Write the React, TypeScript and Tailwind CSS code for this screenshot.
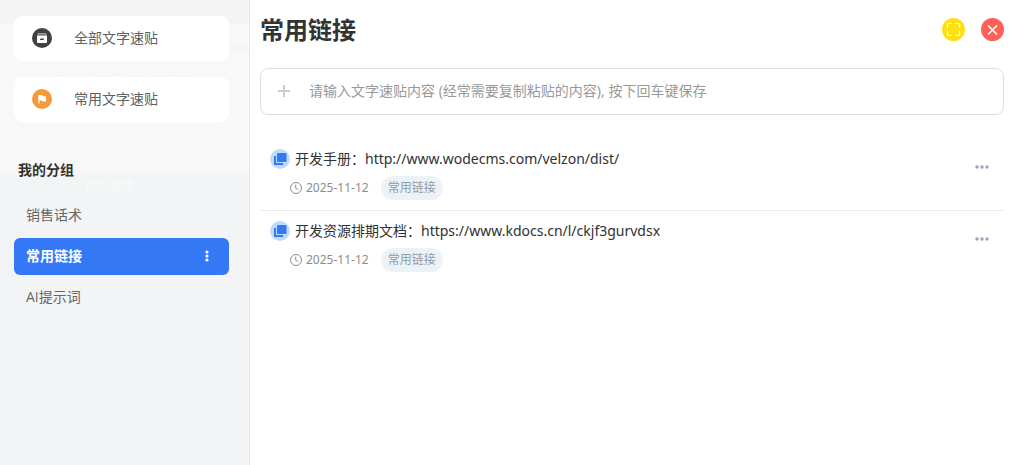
import type { ReactNode } from "react";

type Snippet = { title: string; date: string; group: string };

const groups = ["销售话术", "常用链接", "AI提示词"];
const activeGroup = "常用链接";

const snippets: Snippet[] = [
  { title: "开发手册：http://www.wodecms.com/velzon/dist/", date: "2025-11-12", group: "常用链接" },
  { title: "开发资源排期文档：https://www.kdocs.cn/l/ckjf3gurvdsx", date: "2025-11-12", group: "常用链接" },
];

function ArchiveIcon() {
  return (
    <svg className="size-5 shrink-0" viewBox="0 0 20 20" aria-hidden="true">
      <circle cx="10" cy="10" r="10" fill="#414141" />
      <path d="M6 5h8l1 3H5z" fill="#a9a9a9" />
      <path d="M6.500 6.300h7" stroke="#414141" strokeWidth="0.600" />
      <path d="M5 8h10v6.300a.7.7 0 0 1-.7.7H5.700a.7.7 0 0 1-.7-.7z" fill="#fff" />
      <rect x="8" y="10.500" width="4" height="1.500" rx="0.700" fill="#414141" />
    </svg>
  );
}

function FlagIcon() {
  return (
    <svg className="size-5 shrink-0" viewBox="0 0 20 20" aria-hidden="true">
      <circle cx="10" cy="10" r="10" fill="#f29b38" />
      <path d="M6.300 6h3.900l.5 1.200H14v5.300h-3.300l-.6-1H7.500V14.500H6.300z" fill="#fff" />
    </svg>
  );
}

function CopyIcon() {
  return (
    <svg className="size-5 shrink-0" viewBox="0 0 20 20" aria-hidden="true">
      <circle cx="10" cy="10" r="10" fill="#bcdcfd" />
      <path d="M4 7h2v7h7v2H5a1 1 0 0 1-1-1z" fill="#3478f6" />
      <rect x="7" y="4" width="9.500" height="9" rx="0.800" fill="#3478f6" />
    </svg>
  );
}

function ClockIcon() {
  return (
    <svg className="size-3 shrink-0" viewBox="0 0 12 12" fill="none" stroke="#8c8c8c" aria-hidden="true">
      <circle cx="6" cy="6" r="5.500" />
      <path d="M5.700 2.800v3.500l2.600 1.400" />
    </svg>
  );
}

function Dots({ vertical = false }: { vertical?: boolean }) {
  return vertical ? (
    <svg className="h-3 w-4" viewBox="0 0 16 12" fill="currentColor" aria-hidden="true">
      <circle cx="8" cy="2" r="1.600" />
      <circle cx="8" cy="6" r="1.600" />
      <circle cx="8" cy="10" r="1.600" />
    </svg>
  ) : (
    <svg className="h-4 w-4" viewBox="0 0 16 16" fill="currentColor" aria-hidden="true">
      <circle cx="3" cy="8" r="1.700" />
      <circle cx="8" cy="8" r="1.700" />
      <circle cx="13" cy="8" r="1.700" />
    </svg>
  );
}

function NavCard({ icon, children }: { icon: ReactNode; children: ReactNode }) {
  return (
    <button
      type="button"
      className="relative flex h-[45px] items-center gap-[22px] rounded-lg bg-white px-[18px] pb-px text-left text-sm text-[#606060]"
    >
      {icon}
      {children}
    </button>
  );
}

function Sidebar() {
  return (
    <aside className="relative flex w-[250px] shrink-0 flex-col border-r border-[#e6e8ea] bg-[#f2f4f5] bg-[linear-gradient(to_bottom,#f4f4f4_24px,#f8f8f8_24px,#f8f8f8_175px,#f2f4f5_175px)] py-4 pr-5 pl-[14px] font-['Open_Sans','Noto_Sans_CJK_SC',sans-serif]">
      <div
        aria-hidden="true"
        className="pointer-events-none absolute inset-0 text-xs leading-4 whitespace-nowrap"
      >
        <span className="absolute top-10 right-0 text-[10px] text-[#f3f3f3]">流水</span>
        <span className="absolute top-[71px] left-[54px] text-sm leading-4 text-[#f5f5f5]">晚上要去参加好友婚礼</span>
        <span className="absolute top-[179px] left-[85px] font-bold text-[#f7f8f9]">待办事项</span>
      </div>

      <nav className="flex flex-col gap-4">
        <NavCard icon={<ArchiveIcon />}>全部文字速贴</NavCard>
        <NavCard icon={<FlagIcon />}>常用文字速贴</NavCard>
      </nav>

      <h2 className="relative mt-[38px] mb-[17px] pl-1 text-sm leading-5 font-bold text-[#333]">我的分组</h2>
      <ul className="relative flex flex-col gap-1">
        {groups.map((name) => (
          <li
            key={name}
            className={
              name === activeGroup
                ? "flex h-[37px] items-center rounded-md bg-[#3478f6] pr-[14px] pb-px pl-3 font-bold text-white"
                : "flex h-[37px] items-center rounded-md pr-[14px] pb-px pl-3 text-[#666]"
            }
          >
            <button type="button" className="flex-1 text-left text-sm">
              {name}
            </button>
            {name === activeGroup && (
              <button type="button" aria-label="分组操作">
                <Dots vertical />
              </button>
            )}
          </li>
        ))}
      </ul>
    </aside>
  );
}

function SnippetRow({ title, date, group }: Snippet) {
  return (
    <li className="flex items-center border-b border-[#ebebeb] py-[10px] pr-[14px] pl-[10px] last:border-b-0">
      <div className="min-w-0 flex-1">
        <div className="flex items-center gap-[5px] text-sm leading-5 text-[#303133]">
          <CopyIcon />
          <span className="truncate">{title}</span>
        </div>
        <div className="mt-[7px] flex items-center pl-5 text-xs text-[#8c8c8c]">
          <ClockIcon />
          <time className="mr-3 ml-1" dateTime={date}>
            {date}
          </time>
          <span className="flex h-6 items-center rounded-full bg-[#ecf2f6] px-[7px] text-[#8e9dab]">{group}</span>
        </div>
      </div>
      <button type="button" aria-label="更多操作" className="mb-4 text-[#9aa3b8]">
        <Dots />
      </button>
    </li>
  );
}

export default function App() {
  return (
    <div className="flex min-h-screen bg-white font-['Noto_Sans','Noto_Sans_CJK_SC',sans-serif]">
      <Sidebar />
      <main className="min-w-0 flex-1 pt-[14px] pr-[14px] pl-[10px]">
        <header className="flex items-center justify-between">
          <h1 className="text-2xl leading-8 font-bold text-[#333]">常用链接</h1>
          <div className="flex gap-4 pb-px">
            <button type="button" aria-label="全屏" className="size-[23px] rounded-full bg-[#ffe014]">
              <svg viewBox="0 0 23 23" fill="none" stroke="#fff" strokeWidth="1.200" aria-hidden="true">
                <path d="M5.500 10V6.500a1 1 0 0 1 1-1H10M13 5.500h3.500a1 1 0 0 1 1 1V10M17.500 13v3.500a1 1 0 0 1-1 1H13M10 17.500H6.500a1 1 0 0 1-1-1V13" />
              </svg>
            </button>
            <button type="button" aria-label="关闭" className="size-[23px] rounded-full bg-[#ff6157]">
              <svg viewBox="0 0 23 23" fill="none" stroke="#fff" strokeWidth="1.600" aria-hidden="true">
                <path d="M7 7.500l9 9M16 7.500l-9 9" />
              </svg>
            </button>
          </div>
        </header>

        <label className="mt-[22px] flex h-[47px] items-center gap-[18px] rounded-lg border border-[#dcdfe0] px-4 pb-px">
          <svg className="size-[14px] shrink-0" viewBox="0 0 14 14" stroke="#c8ccd4" strokeWidth="2" aria-hidden="true">
            <path d="M1 7h12M7 1v12" />
          </svg>
          <input
            type="text"
            aria-label="文字速贴内容"
            placeholder="请输入文字速贴内容 (经常需要复制粘贴的内容), 按下回车键保存"
            className="min-w-0 flex-1 bg-transparent text-sm text-[#333] outline-none placeholder:text-[#999]"
          />
        </label>

        <ul className="mt-6">
          {snippets.map((item) => (
            <SnippetRow key={item.title} {...item} />
          ))}
        </ul>
      </main>
    </div>
  );
}
